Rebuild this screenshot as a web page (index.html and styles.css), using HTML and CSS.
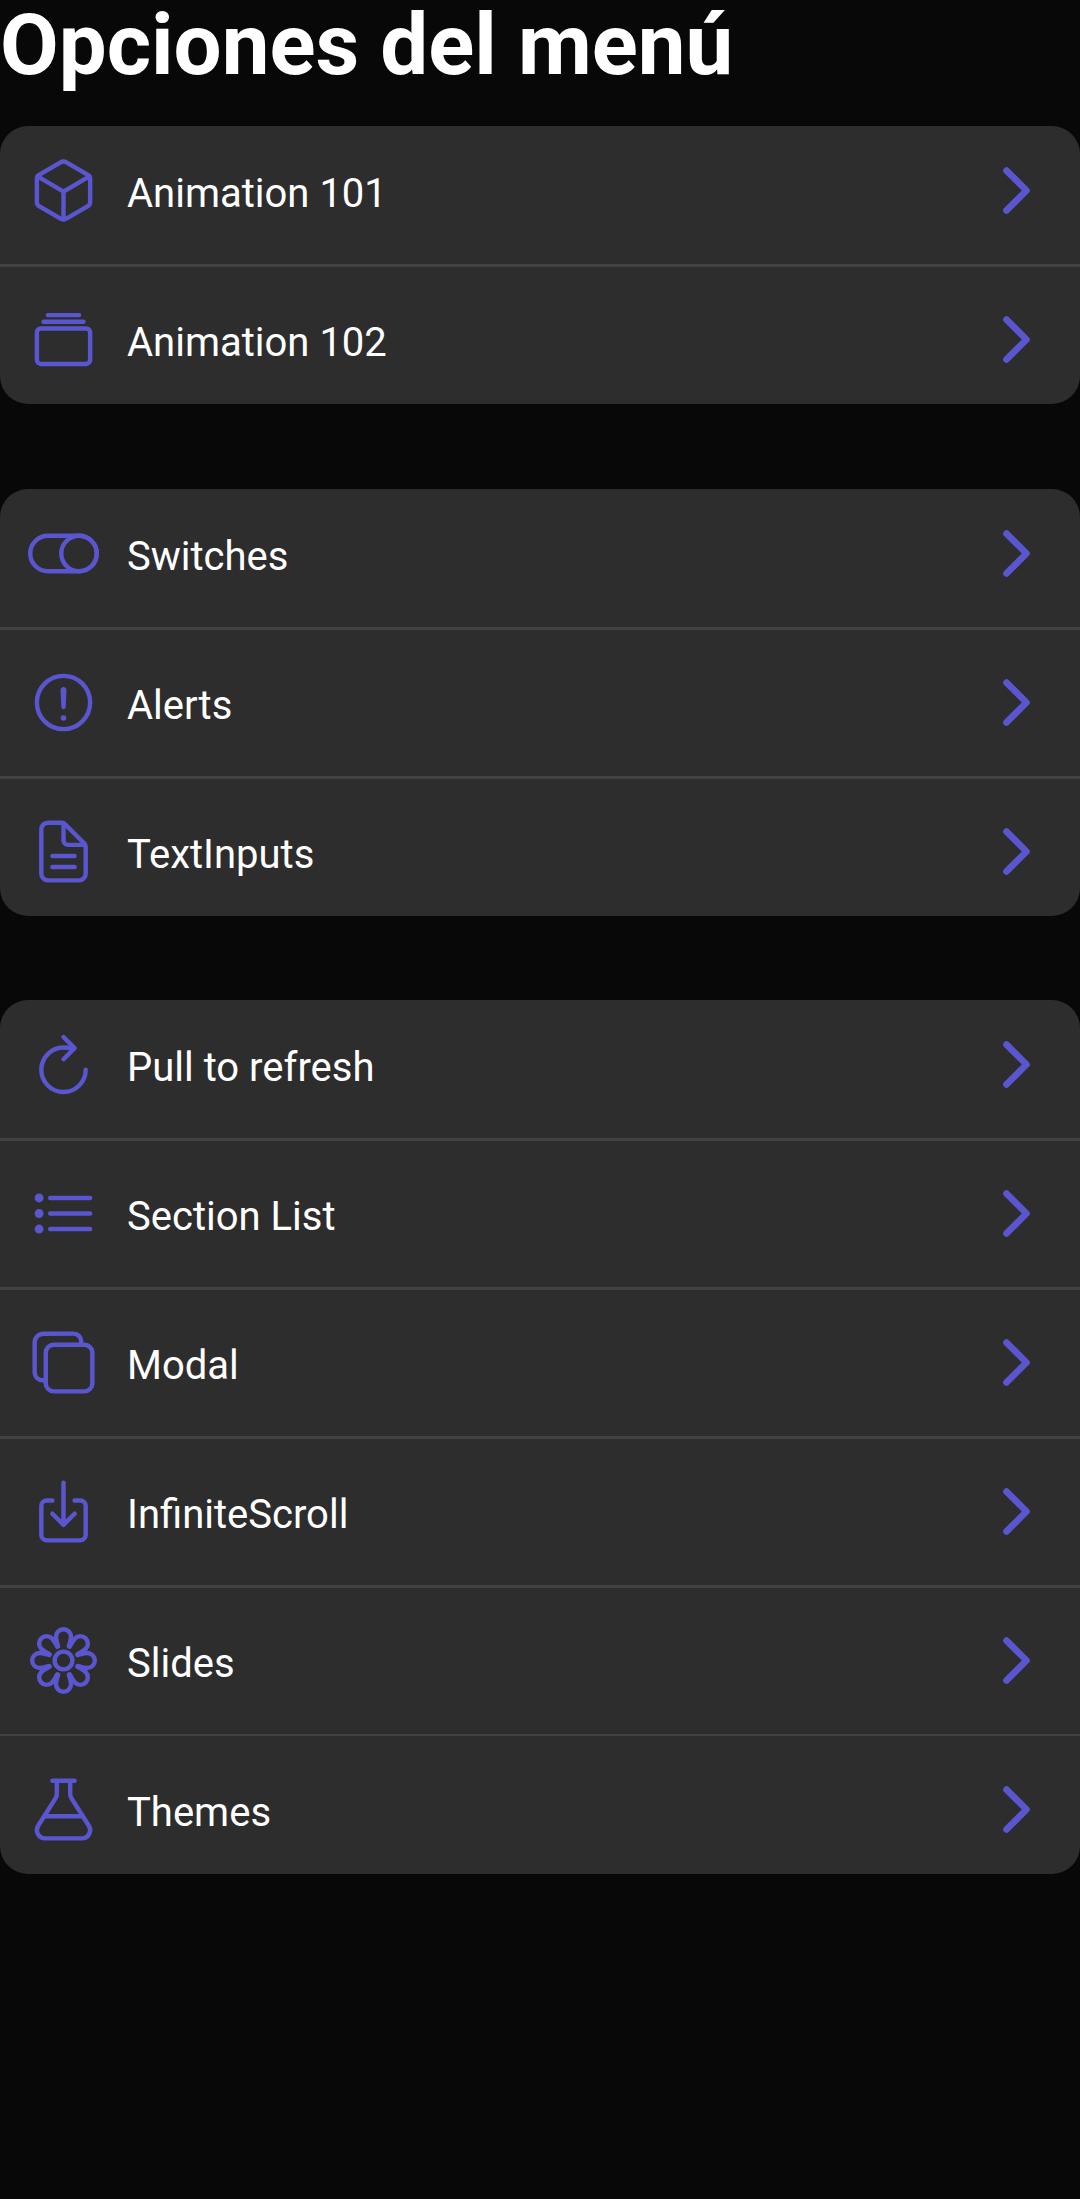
FILE: index.html
```html
<!DOCTYPE html>
<html lang="es">
<head>
<meta charset="utf-8">
<title>Opciones del menú</title>
<link rel="stylesheet" href="styles.css">
</head>
<body>
<svg class="defs" aria-hidden="true">
  <symbol id="chevron" viewBox="0 0 512 512"><path stroke-width="48" d="M184 112l144 144-144 144"/></symbol>
  <symbol id="cube" viewBox="0 0 512 512"><path d="M448 341.37V170.61A32 32 0 00432.11 143l-152-88.46a47.94 47.94 0 00-48.24 0L79.89 143A32 32 0 0064 170.61v170.76A32 32 0 0079.89 369l152 88.46a48 48 0 0048.24 0l152-88.46A32 32 0 00448 341.37z"/><path d="M69 153.99l187 110 187-110M256 463.99v-200"/></symbol>
  <symbol id="albums" viewBox="0 0 512 512"><rect x="64" y="176" width="384" height="256" rx="28.87"/><path d="M144 80h224M112 128h288" stroke-miterlimit="10"/></symbol>
  <symbol id="toggle" viewBox="0 0 512 512"><circle cx="368" cy="256" r="128"/><rect x="16" y="128" width="480" height="256" rx="128"/></symbol>
  <symbol id="alert" viewBox="0 0 512 512"><circle cx="256" cy="256" r="192"/><path d="M250.26 166.05L256 288l5.73-121.95a5.74 5.74 0 00-5.79-6h0a5.74 5.74 0 00-5.68 6z"/><circle class="dot" cx="256" cy="367.91" r="20"/></symbol>
  <symbol id="document" viewBox="0 0 512 512"><path d="M416 221.25V416a48 48 0 01-48 48H144a48 48 0 01-48-48V96a48 48 0 0148-48h98.75a32 32 0 0122.62 9.37l141.26 141.26a32 32 0 019.37 22.62z"/><path d="M256 56v120a32 32 0 0032 32h120M176 288h160M176 368h160"/></symbol>
  <symbol id="refresh" viewBox="0 0 512 512"><path d="M320 146s24.36-12-64-12a160 160 0 10160 160"/><path d="M256 58l80 80-80 80"/></symbol>
  <symbol id="list" viewBox="0 0 512 512"><path d="M160 144h288M160 256h288M160 368h288"/><circle cx="80" cy="144" r="16"/><circle cx="80" cy="256" r="16"/><circle cx="80" cy="368" r="16"/></symbol>
  <symbol id="copy" viewBox="0 0 512 512"><rect x="128" y="128" width="336" height="336" rx="57"/><path d="M383.5 128l.5-24a56.16 56.16 0 00-56-56H112a64.19 64.19 0 00-64 64v216a56.16 56.16 0 0056 56h24"/></symbol>
  <symbol id="download" viewBox="0 0 512 512"><path d="M336 176h40a40 40 0 0140 40v208a40 40 0 01-40 40H136a40 40 0 01-40-40V216a40 40 0 0140-40h40"/><path d="M176 272l80 80 80-80M256 48v288"/></symbol>
  <symbol id="flower" viewBox="0 0 512 512">
    <circle cx="256" cy="256" r="64"/>
    <g id="petals">
      <path id="petal" d="M217 154C213 132 202 112 202 84a54 54 0 01108 0c0 28-11 48-15 70"/>
      <use href="#petal" transform="rotate(45 256 256)"/>
      <use href="#petal" transform="rotate(90 256 256)"/>
      <use href="#petal" transform="rotate(135 256 256)"/>
      <use href="#petal" transform="rotate(180 256 256)"/>
      <use href="#petal" transform="rotate(225 256 256)"/>
      <use href="#petal" transform="rotate(270 256 256)"/>
      <use href="#petal" transform="rotate(315 256 256)"/>
    </g>
  </symbol>
  <symbol id="flask" viewBox="0 0 512 512"><path d="M176 48h160M118 304h276M208 48v93.48a64.09 64.09 0 01-9.88 34.18L73.21 373.49C48.4 412.78 76.63 464 123.08 464h265.84c46.46 0 74.68-51.22 49.87-90.51L313.87 175.66A64.09 64.09 0 01304 141.48V48"/></symbol>
</svg>
<main class="screen">
  <h1 class="title">Opciones del menú</h1>
  <ul class="group">
    <li class="item"><svg class="icon"><use href="#cube"/></svg><span class="label">Animation 101</span><svg class="icon"><use href="#chevron"/></svg></li>
    <li class="item"><svg class="icon"><use href="#albums"/></svg><span class="label">Animation 102</span><svg class="icon"><use href="#chevron"/></svg></li>
  </ul>
  <ul class="group">
    <li class="item"><svg class="icon"><use href="#toggle"/></svg><span class="label">Switches</span><svg class="icon"><use href="#chevron"/></svg></li>
    <li class="item"><svg class="icon"><use href="#alert"/></svg><span class="label">Alerts</span><svg class="icon"><use href="#chevron"/></svg></li>
    <li class="item"><svg class="icon"><use href="#document"/></svg><span class="label">TextInputs</span><svg class="icon"><use href="#chevron"/></svg></li>
  </ul>
  <ul class="group group-long">
    <li class="item"><svg class="icon"><use href="#refresh"/></svg><span class="label">Pull to refresh</span><svg class="icon"><use href="#chevron"/></svg></li>
    <li class="item"><svg class="icon"><use href="#list"/></svg><span class="label">Section List</span><svg class="icon"><use href="#chevron"/></svg></li>
    <li class="item"><svg class="icon"><use href="#copy"/></svg><span class="label">Modal</span><svg class="icon"><use href="#chevron"/></svg></li>
    <li class="item"><svg class="icon"><use href="#download"/></svg><span class="label">InfiniteScroll</span><svg class="icon"><use href="#chevron"/></svg></li>
    <li class="item"><svg class="icon"><use href="#flower"/></svg><span class="label">Slides</span><svg class="icon"><use href="#chevron"/></svg></li>
    <li class="item"><svg class="icon"><use href="#flask"/></svg><span class="label">Themes</span><svg class="icon"><use href="#chevron"/></svg></li>
  </ul>
</main>
</body>
</html>
```
FILE: styles.css
```css
* { box-sizing: border-box; }

body {
  margin: 0;
  background: #080808;
  color: #fff;
  font-family: Roboto, sans-serif;
}

.defs { display: none; }

.screen { min-height: 2199px; }

.title {
  margin: 0;
  height: 126px;
  font-size: 85.2px;
  line-height: 91px;
  font-weight: 700;
  white-space: nowrap;
}

.group {
  margin: 0 0 85px;
  padding: 0;
  list-style: none;
  background: #2d2d2d;
  border-radius: 28px;
  overflow: hidden;
}

.group:nth-of-type(2) { margin-bottom: 84px; }

.item {
  display: flex;
  align-items: flex-start;
  height: 149px;
  padding: 37px 28px 0;
  border-bottom: 3px solid #424242;
}

.item:first-child {
  height: 141px;
  padding-top: 29px;
}

.item:last-child {
  height: 137px;
  border-bottom: 0;
}

.group-long .item:nth-child(5) {
  height: 148px;
  border-bottom-width: 2px;
}

.group-long .item:last-child {
  height: 138px;
  padding-top: 38px;
}

.icon {
  flex: none;
  width: 71px;
  height: 71px;
  fill: none;
  stroke: #5a56cf;
  stroke-width: 32px;
  stroke-linecap: round;
  stroke-linejoin: round;
}

.dot {
  fill: #5a56cf;
  stroke: none;
}

.label {
  flex: 1;
  padding: 3px 0 0 28px;
  font-size: 40px;
  line-height: 71px;
}
```
